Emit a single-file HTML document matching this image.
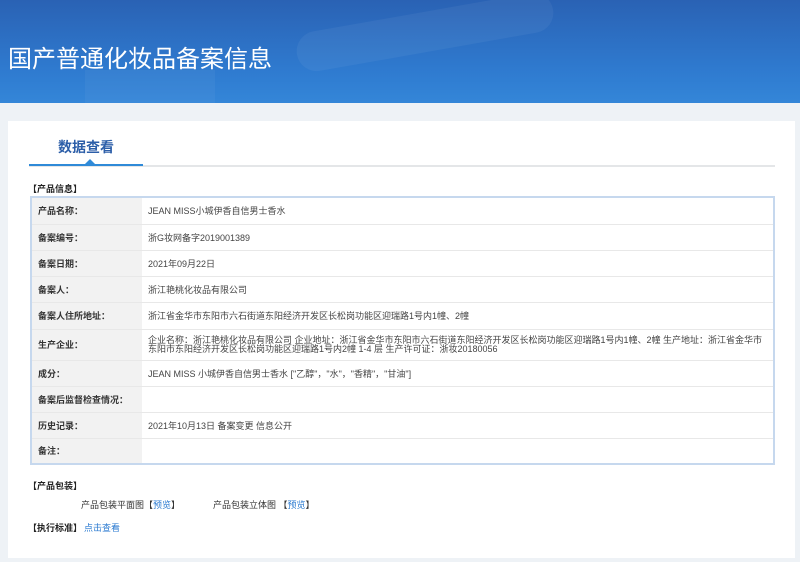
<!DOCTYPE html>
<html><head><meta charset="utf-8"><style>
*{margin:0;padding:0;box-sizing:border-box}
body{width:800px;height:562px;overflow:hidden;background:#eef2f6;font-family:"Liberation Sans","Noto Sans CJK SC",sans-serif;font-size:9px;color:#333;position:relative}
.hd{position:absolute;left:0;top:0;width:800px;height:103px;background:linear-gradient(180deg,#2a62b4 0%,#2f7bd0 70%,#3486d8 100%);overflow:hidden}
.hd .b1{position:absolute;left:295px;top:12px;width:260px;height:40px;border-radius:30px;background:rgba(255,255,255,.05);transform:rotate(-10deg)}
.hd .b2{position:absolute;left:85px;top:70px;width:130px;height:40px;background:rgba(255,255,255,.04)}
.hd h1{position:absolute;left:8px;top:39px;font-size:24px;font-weight:normal;color:#fff;font-family:"Noto Sans CJK SC",sans-serif}
.pn{position:absolute;left:8px;top:121px;width:787px;height:437px;background:#fff}
.tab{position:absolute;left:50px;top:16px;font-size:14px;color:#2c5ea8;font-weight:bold;font-family:"Noto Sans CJK SC",sans-serif}
.gl{position:absolute;left:21px;top:44px;width:746px;height:2px;background:#e4e6e8}
.bl{position:absolute;left:21px;top:43px;width:114px;height:2px;background:#2f8ad8}
.tri{position:absolute;left:77px;top:38px;width:0;height:0;border-left:5px solid transparent;border-right:5px solid transparent;border-bottom:5px solid #2f8ad8}
.sec{position:absolute;font-weight:bold;color:#222;font-family:"Noto Sans CJK SC",sans-serif}
table{position:absolute;left:22px;top:75px;width:745px;border-collapse:collapse;border:2px solid #c6d8ee}
td{border-bottom:1px solid #e8e8e8;padding:0 6px;vertical-align:middle;font-family:"Liberation Sans","Noto Sans CJK SC",sans-serif}
td.l{width:111px;background:#f2f2f2;font-weight:bold;color:#333}
td.v{color:#444}
.lk{color:#2a7ad0}
</style></head><body>
<div class="hd"><div class="b1"></div><div class="b2"></div><h1>国产普通化妆品备案信息</h1></div>
<div class="pn">
<div class="tab">数据查看</div>
<div class="gl"></div><div class="bl"></div><div class="tri"></div>
<div class="sec" style="left:20px;top:61px">【产品信息】</div>
<table>
<tr style="height:27px"><td class="l">产品名称：</td><td class="v">JEAN MISS小城伊香自信男士香水</td></tr>
<tr style="height:26px"><td class="l">备案编号：</td><td class="v">浙G妆网备字2019001389</td></tr>
<tr style="height:26px"><td class="l">备案日期：</td><td class="v">2021年09月22日</td></tr>
<tr style="height:26px"><td class="l">备案人：</td><td class="v">浙江艳桃化妆品有限公司</td></tr>
<tr style="height:27px"><td class="l">备案人住所地址：</td><td class="v">浙江省金华市东阳市六石街道东阳经济开发区长松岗功能区迎瑞路1号内1幢、2幢</td></tr>
<tr style="height:31px"><td class="l">生产企业：</td><td class="v" style="line-height:9px">企业名称：浙江艳桃化妆品有限公司 企业地址：浙江省金华市东阳市六石街道东阳经济开发区长松岗功能区迎瑞路1号内1幢、2幢 生产地址：浙江省金华市东阳市东阳经济开发区长松岗功能区迎瑞路1号内2幢 1-4 层 生产许可证：浙妆20180056</td></tr>
<tr style="height:26px"><td class="l">成分：</td><td class="v">JEAN MISS 小城伊香自信男士香水 ["乙醇"，"水"，"香精"，"甘油"]</td></tr>
<tr style="height:26px"><td class="l">备案后监督检查情况：</td><td class="v"></td></tr>
<tr style="height:26px"><td class="l">历史记录：</td><td class="v">2021年10月13日 备案变更 信息公开</td></tr>
<tr style="height:26px"><td class="l">备注：</td><td class="v"></td></tr>
</table>
<div class="sec" style="left:20px;top:358px">【产品包装】</div>
<div style="position:absolute;left:73px;top:377px">产品包装平面图【<span class="lk">预览</span>】</div>
<div style="position:absolute;left:205px;top:377px">产品包装立体图 【<span class="lk">预览</span>】</div>
<div class="sec" style="left:20px;top:400px">【执行标准】 <span class="lk" style="font-weight:normal">点击查看</span></div>
</div>
</body></html>
